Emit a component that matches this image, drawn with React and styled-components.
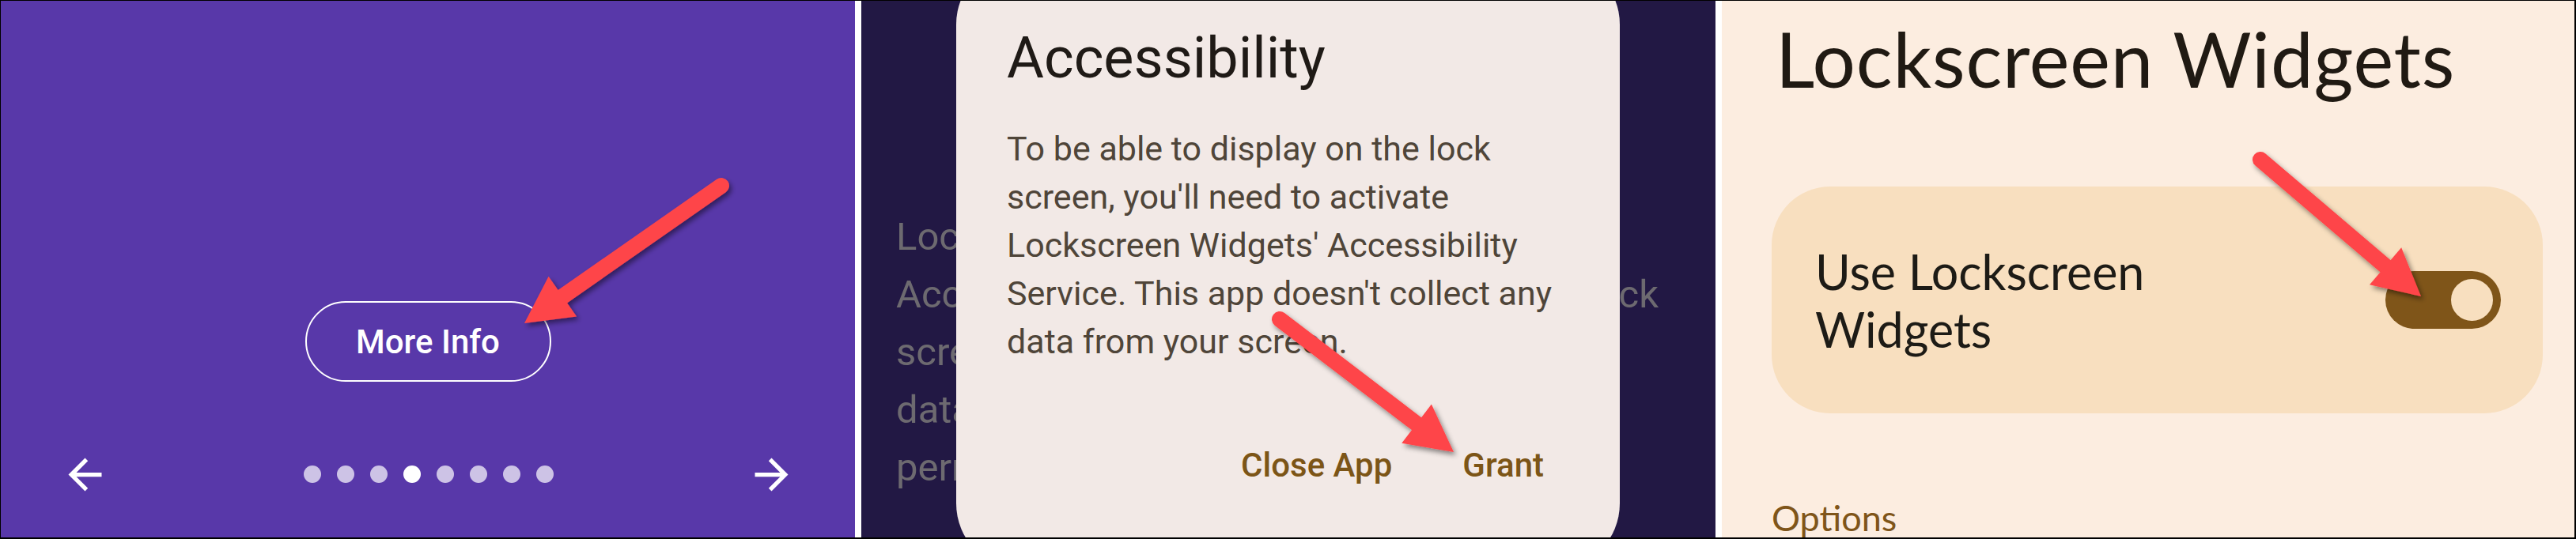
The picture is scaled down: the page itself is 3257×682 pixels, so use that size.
import React from "react";
import styled, { createGlobalStyle } from "styled-components";

const GlobalStyle = createGlobalStyle`
  body {
    margin: 0;
    padding: 0;
    overflow: hidden;
    background: #fff;
  }
  * {
    box-sizing: border-box;
  }
`;

const roboto = `Roboto, "Liberation Sans", sans-serif`;
const productSans = `Lato, "Open Sans", sans-serif`;

const Frame = styled.main`
  position: relative;
  width: 3257px;
  height: 682px;
  border-style: solid;
  border-color: #000;
  border-width: 1px 2px 2px 1px;
  background: #fff;
  display: flex;
  gap: 8px;
  overflow: hidden;
`;

const Panel = styled.section`
  position: relative;
  flex: 0 0 ${(p) => p.$width}px;
  height: 100%;
  background: ${(p) => p.$bg};
  overflow: hidden;
  display: flex;
  flex-direction: column;
`;

/* ---------- intro panel ---------- */

const IntroPanel = styled(Panel)`
  align-items: center;
  justify-content: flex-end;
  padding-bottom: 43px;
`;

const OutlineButton = styled.button`
  width: 311px;
  height: 102px;
  margin-bottom: 80px;
  border: 2.5px solid #fff;
  border-radius: 51px;
  background: transparent;
  color: #fff;
  font-family: ${roboto};
  font-size: 42px;
  font-weight: 500;
  padding: 0;
`;

const NavBar = styled.nav`
  align-self: stretch;
  height: 74px;
  display: flex;
  align-items: center;
  justify-content: space-between;
  padding: 0 74px 0 75px;
`;

const Dots = styled.div`
  display: flex;
  gap: 20px;
`;

const Dot = styled.span`
  width: 22px;
  height: 22px;
  border-radius: 50%;
  background: ${(p) => (p.$active ? "#ffffff" : "#cdc3e6")};
`;

const NavIcon = styled.svg`
  width: 63px;
  height: 63px;
  fill: #fff;
`;

/* ---------- permission panel ---------- */

const BackgroundCopy = styled.div`
  padding: 262px 0 0 44px;
  font-family: ${roboto};
  font-size: 49px;
  line-height: 73px;
  color: #6d6a70;
  white-space: nowrap;
`;

const CopyLine = styled.div`
  display: ${(p) => (p.$split ? "flex" : "block")};
  justify-content: space-between;
  width: ${(p) => (p.$split ? "964px" : "auto")};
`;

const Dialog = styled.div`
  position: absolute;
  left: 120px;
  top: -54px;
  width: 839px;
  height: 774px;
  border-radius: 84px;
  background: #f2e9e6;
  padding: 79px 96px 0 64px;
  display: flex;
  flex-direction: column;
  font-family: ${roboto};
`;

const DialogTitle = styled.h2`
  margin: 0;
  font-size: 72px;
  font-weight: 400;
  line-height: 96px;
  color: #1f1a16;
`;

const DialogBody = styled.p`
  margin: 36px 0 0;
  font-size: 43px;
  line-height: 61px;
  color: #4f4539;
  white-space: nowrap;
`;

const DialogActions = styled.div`
  margin-top: 96px;
  display: flex;
  justify-content: flex-end;
  gap: 89px;
`;

const TextButton = styled.button`
  border: 0;
  padding: 0;
  background: transparent;
  font-family: ${roboto};
  font-size: 42px;
  font-weight: 500;
  line-height: 60px;
  color: #7c5517;
`;

/* ---------- settings panel ---------- */

const SettingsPanel = styled(Panel)`
  padding: 0 40px 0 63px;
  font-family: ${productSans};
`;

const SettingsTitle = styled.h1`
  margin: 13px 0 0 5px;
  font-size: 96px;
  font-weight: 400;
  line-height: 120px;
  letter-spacing: 0.8px;
  color: #201a13;
  white-space: nowrap;
`;

const SwitchCard = styled.div`
  margin-top: 102px;
  height: 287px;
  flex: 0 0 287px;
  border-radius: 74px;
  background: #f8dfbf;
  display: flex;
  align-items: center;
  justify-content: space-between;
  padding: 0 53px 0 55px;
`;

const SwitchLabel = styled.span`
  max-width: 600px;
  font-size: 61px;
  line-height: 73px;
  color: #1d1b16;
`;

const Toggle = styled.span`
  width: 146px;
  height: 73px;
  border-radius: 37px;
  background: #7f5519;
  display: flex;
  align-items: center;
  justify-content: ${(p) => (p.$on ? "flex-end" : "flex-start")};
  padding: 0 10px;
`;

const Knob = styled.span`
  width: 53px;
  height: 53px;
  border-radius: 50%;
  background: #f8dfbf;
`;

const SectionHeader = styled.div`
  margin: 104px 0 0 0;
  font-size: 45px;
  line-height: 56px;
  color: #7f5519;
`;

/* ---------- annotation arrows ---------- */

const Overlay = styled.svg`
  position: absolute;
  left: -1px;
  top: -1px;
  width: 3257px;
  height: 682px;
  pointer-events: none;
`;

function Arrow({ from, to }) {
  const [x1, y1] = from;
  const [x2, y2] = to;
  const len = Math.hypot(x2 - x1, y2 - y1);
  const ux = (x2 - x1) / len;
  const uy = (y2 - y1) / len;
  const nx = -uy;
  const ny = ux;
  const headLen = 59;
  const half = 31;
  const bx = x2 - ux * headLen;
  const by = y2 - uy * headLen;
  const head = [
    [x2, y2],
    [bx + nx * half, by + ny * half],
    [bx - nx * half, by - ny * half],
  ]
    .map((p) => p.join(","))
    .join(" ");
  return (
    <g filter="url(#arrowShadow)">
      <line
        x1={x1}
        y1={y1}
        x2={bx + ux * 4}
        y2={by + uy * 4}
        stroke="#fe4548"
        strokeWidth="20"
        strokeLinecap="round"
      />
      <polygon points={head} fill="#fe4548" />
    </g>
  );
}

const copyLines = [
  "Lockscreen Widgets needs the",
  null,
  "screen. It won't collect any",
  "data. Grant the",
  "permission to continue.",
];

export default function App() {
  return (
    <>
      <GlobalStyle />
      <Frame>
        <IntroPanel $width={1080} $bg="#5838a9">
          <OutlineButton>More Info</OutlineButton>
          <NavBar>
            <NavIcon viewBox="0 0 24 24">
              <path d="M20 11H7.83l5.59-5.59L12 4l-8 8 8 8 1.41-1.41L7.83 13H20v-2z" />
            </NavIcon>
            <Dots>
              {Array.from({ length: 8 }, (_, i) => (
                <Dot key={i} $active={i === 3} />
              ))}
            </Dots>
            <NavIcon viewBox="0 0 24 24">
              <path d="M12 4l-1.41 1.41L16.17 11H4v2h12.17l-5.58 5.59L12 20l8-8z" />
            </NavIcon>
          </NavBar>
        </IntroPanel>

        <Panel $width={1080} $bg="#221844">
          <BackgroundCopy>
            {copyLines.map((line, i) =>
              line ? (
                <CopyLine key={i}>{line}</CopyLine>
              ) : (
                <CopyLine key={i} $split>
                  <span>Accessibility Service to show on</span>
                  <span>the lock</span>
                </CopyLine>
              )
            )}
          </BackgroundCopy>
          <Dialog>
            <DialogTitle>Accessibility</DialogTitle>
            <DialogBody>
              To be able to display on the lock
              <br />
              screen, you'll need to activate
              <br />
              Lockscreen Widgets' Accessibility
              <br />
              Service. This app doesn't collect any
              <br />
              data from your screen.
            </DialogBody>
            <DialogActions>
              <TextButton>Close App</TextButton>
              <TextButton>Grant</TextButton>
            </DialogActions>
          </Dialog>
        </Panel>

        <SettingsPanel $width={1078} $bg="#fcede0">
          <SettingsTitle>Lockscreen Widgets</SettingsTitle>
          <SwitchCard>
            <SwitchLabel>
              Use Lockscreen
              <br />
              Widgets
            </SwitchLabel>
            <Toggle $on>
              <Knob />
            </Toggle>
          </SwitchCard>
          <SectionHeader>Options</SectionHeader>
        </SettingsPanel>

        <Overlay viewBox="0 0 3257 682">
          <defs>
            <filter id="arrowShadow" x="-20%" y="-20%" width="140%" height="140%">
              <feDropShadow dx="3" dy="4" stdDeviation="3" floodColor="#000" floodOpacity="0.45" />
            </filter>
          </defs>
          <Arrow from={[912, 235]} to={[663, 409]} />
          <Arrow from={[1618, 404]} to={[1838, 572]} />
          <Arrow from={[2858, 202]} to={[3061, 375]} />
        </Overlay>
      </Frame>
    </>
  );
}
